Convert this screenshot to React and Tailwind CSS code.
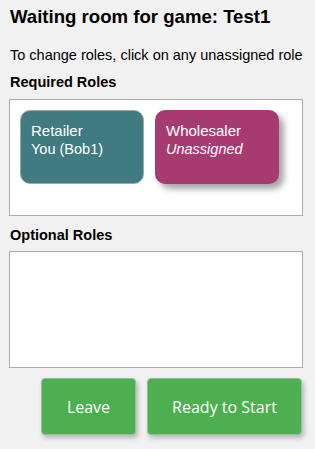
export default function App() {
  return (
    <div className="w-[315px] h-[449px] bg-[#f1f1f1] font-['Liberation_Sans',Arial,sans-serif] text-black overflow-hidden">
      <div className="pl-[9px] pr-[12px] pt-[6px]">
        <h1 className="text-[18.6px] font-bold leading-[22px] pl-px">Waiting room for game: Test1</h1>
        <p className="text-[14.5px] leading-[16px] mt-[19px] pl-px whitespace-nowrap">To change roles, click on any unassigned role</p>
        <h2 className="text-[14.5px] font-bold leading-[16px] mt-[11px] pl-px">Required Roles</h2>

        {/* Required roles */}
        <div className="mt-[9px] h-[117px] bg-white border border-[#aaaaaa] flex gap-[11px] pl-[10px] pt-[10px]">
          <div className="w-[124px] h-[74px] rounded-[10px] bg-[#3f7b80] border border-[#9aa9aa] text-white px-[10px] pt-[11px]">
            <div className="text-[15px] leading-[18px]">Retailer</div>
            <div className="text-[14.5px] leading-[18px]">You (Bob1)</div>
          </div>
          <div className="w-[124px] h-[74px] rounded-[10px] bg-[#a83a72] text-white px-[11px] pt-[12px] shadow-[5px_5px_6px_rgba(0,0,0,0.35)]">
            <div className="text-[15px] leading-[18px]">Wholesaler</div>
            <div className="text-[14.5px] leading-[18px] italic">Unassigned</div>
          </div>
        </div>

        <h2 className="text-[14.5px] font-bold leading-[16px] mt-[11px] pl-px">Optional Roles</h2>
        <div className="mt-[8px] h-[117px] bg-white border border-[#aaaaaa]" />

        <div className="flex justify-end gap-[11px] mt-[10px] pr-px">
          <button className="w-[95px] h-[57px] rounded-[4px] bg-[#4caf50] border border-[#9fb9a0] text-white text-[16px] font-['Open_Sans',sans-serif] shadow-[2px_3px_5px_rgba(0,0,0,0.25)]">
            Leave
          </button>
          <button className="w-[155px] h-[57px] rounded-[4px] bg-[#4caf50] border border-[#9fb9a0] text-white text-[16px] font-['Open_Sans',sans-serif] shadow-[2px_3px_5px_rgba(0,0,0,0.25)]">
            Ready to Start
          </button>
        </div>
      </div>
    </div>
  )
}
